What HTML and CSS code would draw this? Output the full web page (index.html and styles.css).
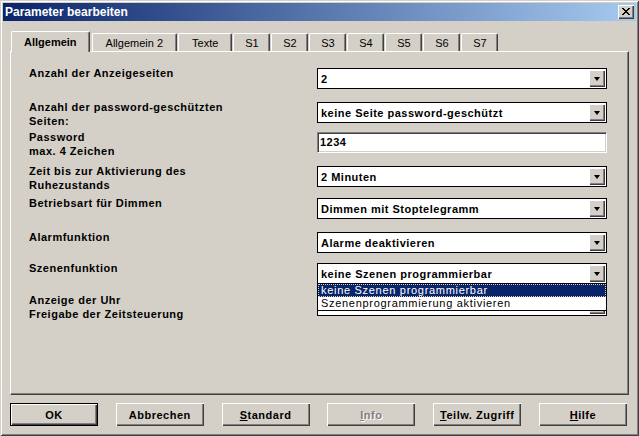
FILE: index.html
```html
<!DOCTYPE html>
<html lang="de">
<head>
  <meta charset="UTF-8">
  <title>Parameter bearbeiten</title>
  <link rel="stylesheet" href="styles.css">
</head>
<body>
  <div class="window">
    <div class="titlebar">
      <span class="title">Parameter bearbeiten</span>
      <button class="close-btn" type="button">
        <svg width="8" height="7" viewBox="0 0 8 7"><path d="M0 0h2v1H0zM6 0h2v1H6zM1 1h2v1H1zM5 1h2v1H5zM2 2h4v1H2zM3 3h2v1H3zM2 4h4v1H2zM1 5h2v1H1zM5 5h2v1H5zM0 6h2v1H0zM6 6h2v1H6z" fill="#000"/></svg>
      </button>
    </div>

    <div class="tabs">
      <div class="tab active">Allgemein</div>
      <div class="tab">Allgemein 2</div>
      <div class="tab">Texte</div>
      <div class="tab narrow">S1</div>
      <div class="tab narrow">S2</div>
      <div class="tab narrow">S3</div>
      <div class="tab narrow">S4</div>
      <div class="tab narrow">S5</div>
      <div class="tab narrow">S6</div>
      <div class="tab narrow">S7</div>
    </div>

    <div class="panel">
      <div class="row tall">
        <div class="label">Anzahl der Anzeigeseiten</div>
        <div class="combo"><span class="value">2</span><span class="drop-btn"><i></i></span></div>
      </div>
      <div class="row short">
        <div class="label">Anzahl der password-geschützten<br>Seiten:</div>
        <div class="combo"><span class="value">keine Seite password-geschützt</span><span class="drop-btn"><i></i></span></div>
      </div>
      <div class="row tall">
        <div class="label">Password<br>max. 4 Zeichen</div>
        <div class="textbox">1234</div>
      </div>
      <div class="row">
        <div class="label">Zeit bis zur Aktivierung des<br>Ruhezustands</div>
        <div class="combo"><span class="value">2 Minuten</span><span class="drop-btn"><i></i></span></div>
      </div>
      <div class="row tall">
        <div class="label">Betriebsart für Dimmen</div>
        <div class="combo"><span class="value">Dimmen mit Stoptelegramm</span><span class="drop-btn"><i></i></span></div>
      </div>
      <div class="row mid">
        <div class="label">Alarmfunktion</div>
        <div class="combo"><span class="value">Alarme deaktivieren</span><span class="drop-btn"><i></i></span></div>
      </div>
      <div class="row">
        <div class="label">Szenenfunktion</div>
        <div class="combo open">
          <span class="value">keine Szenen programmierbar</span><span class="drop-btn"><i></i></span>
          <ul class="dropdown">
            <li class="selected">keine Szenen programmierbar</li>
            <li>Szenenprogrammierung aktivieren</li>
          </ul>
        </div>
      </div>
      <div class="row">
        <div class="label">Anzeige der Uhr<br>Freigabe der Zeitsteuerung</div>
        <div class="combo"><span class="value"></span><span class="drop-btn"><i></i></span></div>
      </div>
    </div>

    <div class="buttons">
      <button type="button" class="btn default">OK</button>
      <button type="button" class="btn">Abbrechen</button>
      <button type="button" class="btn"><u>S</u>tandard</button>
      <button type="button" class="btn disabled"><u>I</u>nfo</button>
      <button type="button" class="btn"><u>T</u>eilw. Zugriff</button>
      <button type="button" class="btn"><u>H</u>ilfe</button>
    </div>
  </div>
</body>
</html>
```

FILE: styles.css
```css
* {
  box-sizing: border-box;
}

body {
  margin: 0;
  font-family: "Liberation Sans", Arial, sans-serif;
  font-size: 11px;
  color: #000;
  background: #d4d0c8;
}

.window {
  width: 639px;
  height: 436px;
  padding: 3px;
  background: #d4d0c8;
  display: flex;
  flex-direction: column;
  box-shadow: inset 1px 1px 0 #d4d0c8, inset -1px -1px 0 #404040,
              inset 2px 2px 0 #fff, inset -2px -2px 0 #808080;
}

.titlebar {
  height: 18px;
  padding: 0 2px;
  background: linear-gradient(to right, #0a246a, #a6caf0);
  display: flex;
  align-items: center;
  justify-content: space-between;
}

.title {
  color: #fff;
  font-weight: bold;
  font-size: 12px;
}

.close-btn {
  width: 16px;
  height: 14px;
  padding: 0 1px 1px 0;
  border: none;
  background: #d4d0c8;
  display: flex;
  align-items: center;
  justify-content: center;
  box-shadow: inset 1px 1px 0 #fff, inset -1px -1px 0 #404040, inset -2px -2px 0 #808080;
}

.close-btn svg {
  display: block;
}

/* tab strip */
.tabs {
  display: flex;
  align-items: flex-end;
  gap: 1px;
  height: 20px;
  margin: 10px 0 0 8px;
  position: relative;
  z-index: 1;
}

.tab {
  height: 18px;
  padding: 0 13px;
  background: #d4d0c8;
  border-top: 1px solid #fff;
  border-left: 1px solid #fff;
  border-right: 1px solid #404040;
  border-radius: 2px 2px 0 0;
  box-shadow: inset -1px 0 0 #808080;
  display: flex;
  align-items: center;
  justify-content: center;
  white-space: nowrap;
}

.tab.narrow {
  width: 37px;
  padding: 0;
}

.tab.active {
  height: 21px;
  margin-bottom: -1px;
  margin-right: 1px;
  padding: 0 12px;
  font-weight: bold;
}

/* page content */
.panel {
  height: 344px;
  margin: 0 7px;
  padding: 16px 0 0 18px;
  border-top: 1px solid #fff;
  border-left: 1px solid #fff;
  border-right: 1px solid #404040;
  border-bottom: 1px solid #404040;
  box-shadow: inset -1px -1px 0 #808080;
}

.row {
  display: grid;
  grid-template-columns: 288px 290px;
  height: 32px;
}

.row.tall {
  height: 34px;
}

.row.short {
  height: 30px;
}

.row.mid {
  height: 31px;
}

.label {
  margin-top: -2px;
  line-height: 14px;
  font-weight: bold;
  letter-spacing: 0.5px;
}

.combo {
  position: relative;
  height: 21px;
  border: 1px solid #000;
  background: #fff;
  display: flex;
  align-items: center;
  justify-content: space-between;
}

.combo .value {
  padding-left: 3px;
  font-weight: bold;
  letter-spacing: 0.5px;
  white-space: nowrap;
}

.drop-btn {
  width: 16px;
  height: 17px;
  margin-right: 1px;
  background: #d4d0c8;
  display: flex;
  align-items: center;
  justify-content: center;
  box-shadow: inset 1px 1px 0 #fff, inset -1px -1px 0 #404040, inset -2px -2px 0 #808080;
}

.drop-btn i {
  width: 1px;
  height: 0;
  border-left: 3px solid transparent;
  border-right: 3px solid transparent;
  border-top: 4px solid #000;
}

.textbox {
  height: 21px;
  padding-left: 2px;
  background: #fff;
  border-top: 1px solid #808080;
  border-left: 1px solid #808080;
  border-bottom: 1px solid #fff;
  border-right: 1px solid #fff;
  box-shadow: inset 1px 1px 0 #404040, inset -1px -1px 0 #d4d0c8;
  line-height: 19px;
  font-weight: bold;
  letter-spacing: 0.5px;
}

.dropdown {
  position: absolute;
  top: 19px;
  left: -1px;
  width: 290px;
  margin: 0;
  padding: 0;
  list-style: none;
  background: #fff;
  border: 1px solid #000;
  z-index: 2;
}

.dropdown li {
  height: 13px;
  line-height: 13px;
  padding-left: 3px;
  letter-spacing: 0.7px;
  white-space: nowrap;
}

.dropdown li.selected {
  background: #0a246a;
  color: #fff;
  outline: 1px dotted #d4d0c8;
  outline-offset: -1px;
}

/* dialog buttons */
.buttons {
  display: flex;
  justify-content: space-between;
  margin: 8px 9px 0 7px;
}

.btn {
  width: 88px;
  height: 23px;
  padding: 0;
  border: none;
  background: #d4d0c8;
  font-family: "Liberation Sans", Arial, sans-serif;
  font-size: 11px;
  font-weight: bold;
  letter-spacing: 0.5px;
  color: #000;
  box-shadow: inset 1px 1px 0 #fff, inset -1px -1px 0 #404040, inset -2px -2px 0 #808080;
}

.btn.default {
  box-shadow: inset 0 0 0 1px #000, inset 2px 2px 0 #fff,
              inset -2px -2px 0 #404040, inset -3px -3px 0 #808080;
}

.btn.disabled {
  color: #808080;
  text-shadow: 1px 1px 0 #fff;
}
```
